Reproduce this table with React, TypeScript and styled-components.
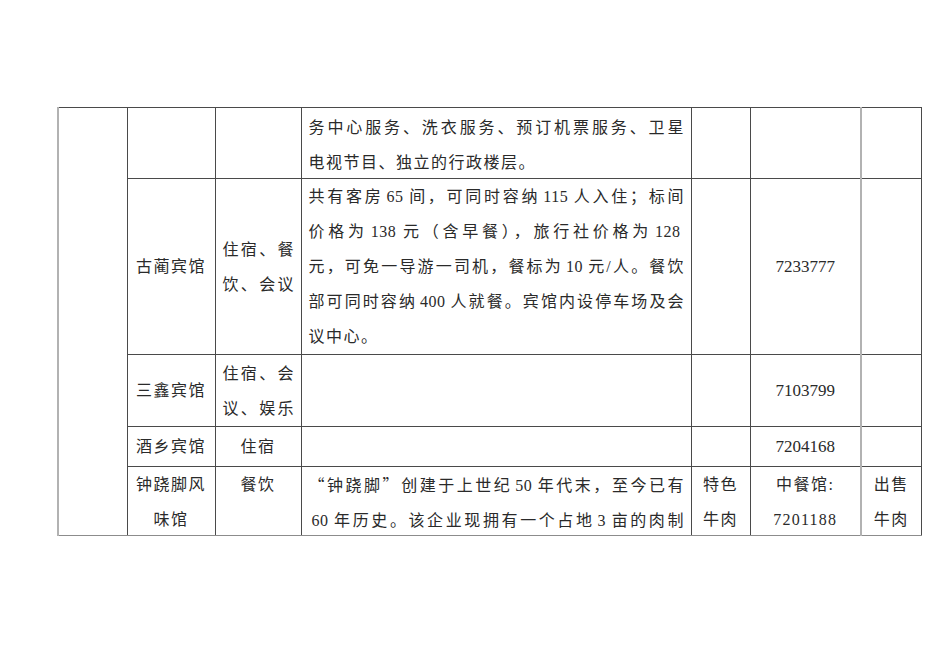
import React from "react";
import styled, { createGlobalStyle, css } from "styled-components";

const GlobalStyle = createGlobalStyle`
  html, body {
    margin: 0;
    background: #ffffff;
  }
`;

const Page = styled.div`
  padding: 107px 0 0 57px;
  font-family: "Liberation Serif", "Noto Sans CJK SC", serif;
  font-size: 16px;
  color: #2a2a2a;
`;

const Sheet = styled.table`
  border-collapse: collapse;
  table-layout: fixed;
  width: 864px;
`;

const Col = styled.col<{ $w: number }>`
  width: ${(p) => p.$w}px;
`;

const Row = styled.tr<{ $h: number }>`
  height: ${(p) => p.$h}px;
`;

const Cell = styled.td<{
  $align?: "left" | "center";
  $top?: boolean;
  $edge?: boolean;
  $split?: boolean;
  $last?: boolean;
}>`
  border: 1px solid #4a4a4a;
  padding: 0 7px;
  line-height: 35px;
  letter-spacing: 1.5px;
  text-align: ${(p) => p.$align || "center"};
  vertical-align: ${(p) => (p.$top ? "top" : "middle")};
  white-space: nowrap;
  overflow: hidden;
  ${(p) =>
    p.$edge &&
    css`
      border-left: 2px solid #b2b2b2;
    `}
  ${(p) =>
    p.$split &&
    css`
      border-right: 2px solid #b2b2b2;
    `}
  ${(p) =>
    p.$last &&
    css`
      border-bottom: 1px solid #8c8c8c;
    `}
`;

// the page is cut off, so some cells clip their text to the row
const Clip = styled.div<{ $h: number; $pad?: number }>`
  height: ${(p) => p.$h}px;
  padding-top: ${(p) => p.$pad || 0}px;
  box-sizing: border-box;
  overflow: hidden;
`;

const Line = styled.span<{ $justify?: boolean }>`
  display: block;
  ${(p) =>
    p.$justify &&
    css`
      text-align: justify;
      text-align-last: justify;
      letter-spacing: 0;
    `}
`;

const Num = styled.span`
  margin: 0 3px;
  letter-spacing: 0.5px;
`;

// full-width quotation marks, as in the Chinese source
const Quote = styled.span`
  font-family: "Noto Sans CJK SC", sans-serif;
`;

const Phone = styled.span<{ $spaced?: boolean }>`
  font-size: ${(p) => (p.$spaced ? "16px" : "17px")};
  letter-spacing: ${(p) => (p.$spaced ? "1.2px" : "0")};
`;

type Part = string | { n: string } | { q: string };
type Lines = { parts: Part[]; justify?: boolean }[];

function Text({ lines }: { lines: Lines }) {
  return (
    <>
      {lines.map((l, i) => (
        <Line key={i} $justify={l.justify}>
          {l.parts.map((p, j) => {
            if (typeof p === "string") return p;
            if ("n" in p) return <Num key={j}>{p.n}</Num>;
            return <Quote key={j}>{p.q}</Quote>;
          })}
        </Line>
      ))}
    </>
  );
}

const widths = [69, 88, 86, 390, 59, 111, 60];

export default function App() {
  return (
    <Page>
      <GlobalStyle />
      <Sheet>
        <colgroup>
          {widths.map((w, i) => (
            <Col key={i} $w={w} />
          ))}
        </colgroup>
        <tbody>
          <Row $h={70}>
            <Cell rowSpan={5} $edge $last />
            <Cell />
            <Cell />
            <Cell $align="left" $top>
              <Clip $h={70} $pad={2}>
                <Text
                  lines={[
                    { parts: ["务中心服务、洗衣服务、预订机票服务、卫星"], justify: true },
                    { parts: ["电视节目、独立的行政楼层。"] },
                  ]}
                />
              </Clip>
            </Cell>
            <Cell />
            <Cell $split />
            <Cell />
          </Row>
          <Row $h={176}>
            <Cell>古蔺宾馆</Cell>
            <Cell $align="left">
              <Text
                lines={[
                  { parts: ["住宿、餐"], justify: true },
                  { parts: ["饮、会议"], justify: true },
                ]}
              />
            </Cell>
            <Cell $align="left">
              <Text
                lines={[
                  { parts: ["共有客房", { n: "65" }, "间，可同时容纳", { n: "115" }, "人入住；标间"], justify: true },
                  { parts: ["价格为", { n: "138" }, "元（含早餐），旅行社价格为", { n: "128" }], justify: true },
                  { parts: ["元，可免一导游一司机，餐标为", { n: "10" }, "元/人。餐饮"], justify: true },
                  { parts: ["部可同时容纳", { n: "400" }, "人就餐。宾馆内设停车场及会"], justify: true },
                  { parts: ["议中心。"] },
                ]}
              />
            </Cell>
            <Cell />
            <Cell $split>
              <Phone>7233777</Phone>
            </Cell>
            <Cell />
          </Row>
          <Row $h={72}>
            <Cell>三鑫宾馆</Cell>
            <Cell $align="left">
              <Text
                lines={[
                  { parts: ["住宿、会"], justify: true },
                  { parts: ["议、娱乐"], justify: true },
                ]}
              />
            </Cell>
            <Cell />
            <Cell />
            <Cell $split>
              <Phone>7103799</Phone>
            </Cell>
            <Cell />
          </Row>
          <Row $h={40}>
            <Cell>酒乡宾馆</Cell>
            <Cell>住宿</Cell>
            <Cell />
            <Cell />
            <Cell $split>
              <Phone>7204168</Phone>
            </Cell>
            <Cell />
          </Row>
          <Row $h={68}>
            <Cell $top $last>
              <Clip $h={68}>
                <Text lines={[{ parts: ["钟跷脚风"] }, { parts: ["味馆"] }]} />
              </Clip>
            </Cell>
            <Cell $top $last>
              <Clip $h={68}>餐饮</Clip>
            </Cell>
            <Cell $align="left" $top $last>
              <Clip $h={68}>
                <Text
                  lines={[
                    {
                      parts: [{ q: "“" }, "钟跷脚", { q: "”" }, "创建于上世纪", { n: "50" }, "年代末，至今已有"],
                      justify: true,
                    },
                    { parts: [{ n: "60" }, "年历史。该企业现拥有一个占地", { n: "3" }, "亩的肉制"], justify: true },
                  ]}
                />
              </Clip>
            </Cell>
            <Cell $top $last>
              <Clip $h={68}>
                <Text lines={[{ parts: ["特色"] }, { parts: ["牛肉"] }]} />
              </Clip>
            </Cell>
            <Cell $top $split $last>
              <Clip $h={68}>
                <Line>中餐馆:</Line>
                <Line>
                  <Phone $spaced>7201188</Phone>
                </Line>
              </Clip>
            </Cell>
            <Cell $top $last>
              <Clip $h={68}>
                <Text lines={[{ parts: ["出售"] }, { parts: ["牛肉"] }]} />
              </Clip>
            </Cell>
          </Row>
        </tbody>
      </Sheet>
    </Page>
  );
}
